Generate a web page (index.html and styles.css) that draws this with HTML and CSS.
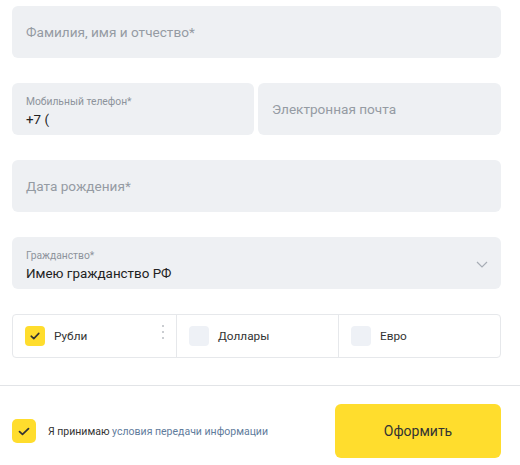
FILE: index.html
```html
<!DOCTYPE html>
<html lang="ru">
<head>
<meta charset="utf-8">
<link rel="stylesheet" href="styles.css">
</head>
<body>
<form class="form">
  <div class="fields">
    <div class="field field-empty"><span class="placeholder">Фамилия, имя и отчество*</span></div>
    <div class="row">
      <div class="field field-filled">
        <span class="label">Мобильный телефон*</span>
        <span class="value">+7 (</span>
      </div>
      <div class="field field-empty"><span class="placeholder">Электронная почта</span></div>
    </div>
    <div class="field field-empty"><span class="placeholder">Дата рождения*</span></div>
    <div class="field field-filled field-select">
      <span class="label">Гражданство*</span>
      <span class="value">Имею гражданство РФ</span>
      <svg class="chevron" width="12" height="7" viewBox="0 0 12 7"><path d="M1 1l5 5 5-5" fill="none" stroke="#a7adb5" stroke-width="1.2"/></svg>
    </div>
    <div class="currencies">
      <div class="currency">
        <span class="check check-on"><svg width="10" height="8" viewBox="0 0 10 8"><path d="M1.2 4.2l2.6 2.4L8.8 1.4" fill="none" stroke="#333" stroke-width="1.6" stroke-linecap="round" stroke-linejoin="round"/></svg></span>
        <span class="cur-label">Рубли</span>
        <span class="dots"><i></i><i></i><i></i></span>
      </div>
      <div class="currency">
        <span class="check"></span>
        <span class="cur-label">Доллары</span>
      </div>
      <div class="currency">
        <span class="check"></span>
        <span class="cur-label">Евро</span>
      </div>
    </div>
  </div>
  <div class="footer">
    <label class="agree">
      <span class="check check-on check-big"><svg width="12" height="9" viewBox="0 0 12 9"><path d="M1.5 4.6l3 2.8L10.5 1.6" fill="none" stroke="#333" stroke-width="1.7" stroke-linecap="round" stroke-linejoin="round"/></svg></span>
      <span class="agree-text">Я принимаю <a class="link">условия передачи информации</a></span>
    </label>
    <button type="button" class="submit">Оформить</button>
  </div>
</form>
</body>
</html>
```
FILE: styles.css
```css
* { box-sizing: border-box; }
body {
  margin: 0;
  background: #fff;
  font-family: Roboto, "Noto Sans", sans-serif;
  color: #333;
}
.fields {
  padding: 6px 19px 0 12px;
  display: flex;
  flex-direction: column;
  gap: 25px;
}
.row {
  display: flex;
  gap: 4px;
}
.row .field:first-child { width: 242px; }
.row .field:last-child { flex: 1; }
.field {
  position: relative;
  height: 52px;
  background: #eef0f3;
  border-radius: 6px;
  padding: 0 14px;
  display: flex;
  flex-direction: column;
  justify-content: center;
}
.placeholder {
  font-size: 13.6px;
  color: #959ba3;
}
.field-filled { justify-content: flex-start; padding-top: 12px; }
.label {
  font-size: 10.3px;
  color: #8d939b;
  line-height: 13px;
}
.value {
  font-size: 13.4px;
  color: #222;
  line-height: 19px;
  margin-top: 2px;
}
.chevron {
  position: absolute;
  right: 13px;
  top: 24px;
}
.currencies {
  display: grid;
  grid-template-columns: 163px 162px 1fr;
  height: 44px;
  border: 1px solid #e6e8eb;
  border-radius: 4px;
}
.currency {
  position: relative;
  display: flex;
  align-items: center;
  padding-left: 12px;
  gap: 9px;
}
.currency + .currency { border-left: 1px solid #e6e8eb; }
.check {
  width: 20px;
  height: 20px;
  border-radius: 4px;
  background: #eef1f6;
  display: flex;
  align-items: center;
  justify-content: center;
  flex: none;
}
.check-on { background: #ffdd2d; }
.cur-label { font-size: 11.8px; color: #333; }
.dots {
  position: absolute;
  right: 12px;
  top: 10px;
  display: flex;
  flex-direction: column;
  gap: 4px;
}
.dots i {
  display: block;
  width: 2px;
  height: 2px;
  border-radius: 50%;
  background: #b8bcc2;
}
.footer {
  margin-top: 27px;
  border-top: 1px solid #e2e4e7;
  padding: 18px 19px 0 12px;
  display: flex;
  align-items: center;
  justify-content: space-between;
}
.agree {
  display: flex;
  align-items: center;
  gap: 12px;
}
.check-big { width: 24px; height: 24px; border-radius: 5px; }
.agree-text { font-size: 10.5px; color: #333; }
.link { color: #5f7c9c; }
.submit {
  width: 166px;
  height: 54px;
  border: none;
  border-radius: 6px;
  background: #ffdd2d;
  font-family: inherit;
  font-size: 14px;
  color: #333;
}
```
